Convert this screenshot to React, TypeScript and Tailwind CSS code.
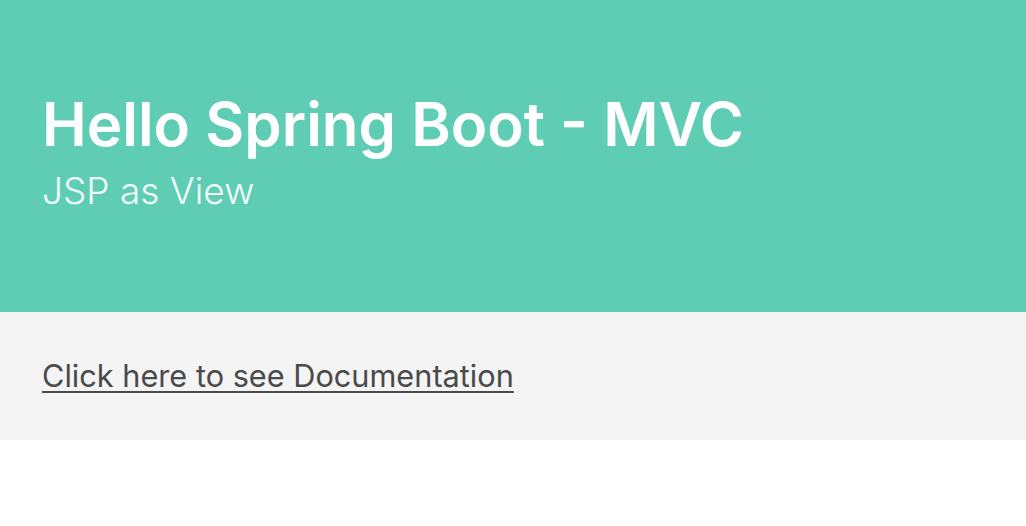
export default function App() {
  return (
    <div className="min-h-screen bg-white font-['Inter','Liberation_Sans',sans-serif]">
      <header className="h-[312px] bg-[#5ecdb4] px-[42px] pt-[86px] text-white">
        <h1 className="text-[60px] font-semibold leading-[76px]">Hello Spring Boot - MVC</h1>
        <p className="mt-[6px] text-[37px] font-light leading-[46px] text-[#f2fbf8]">JSP as View</p>
      </header>
      <section className="flex h-[128px] items-center bg-[#f4f4f4] px-[42px]">
        <a
          href="#"
          className="text-[30.7px] leading-[40px] text-[#4a4a4a] underline decoration-2 underline-offset-[4px]"
        >
          Click here to see Documentation
        </a>
      </section>
    </div>
  );
}
